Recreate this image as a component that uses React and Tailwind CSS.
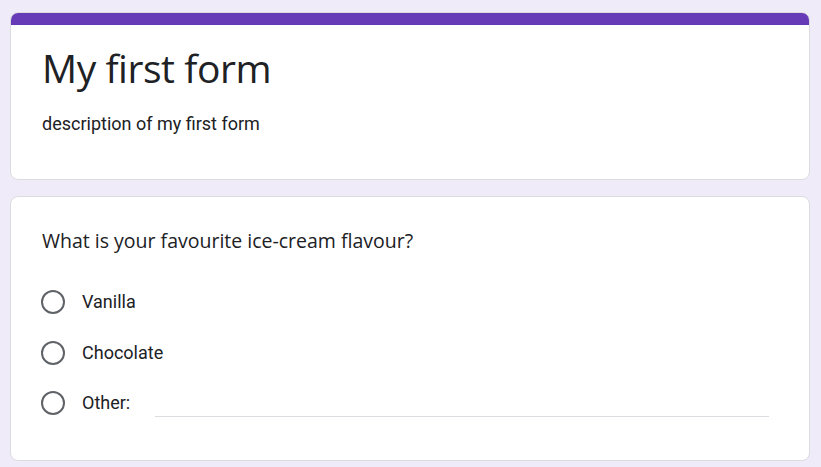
import React from 'react'

const options = ['Vanilla', 'Chocolate']

const Radio = () => (
  <div className="w-6 h-6 -ml-px rounded-full border-2 border-[#5f6368] shrink-0"></div>
)

const App = () => {
  return (
    <div className="min-h-[467px] bg-[#f0ebf8] pt-3 px-[10px] font-['Roboto',sans-serif] text-[#202124]">
      <div className="w-[800px] bg-white rounded-lg border border-[#dadce0] overflow-hidden">
        <div className="h-[13px] bg-[#673ab7] -mx-px -mt-px"></div>
        <div className="px-[31px] pt-[19px] pb-[43px]">
          <h1 className="text-[39px] leading-[48px] font-['Open_Sans',sans-serif] tracking-[-0.45px]">My first form</h1>
          <p className="mt-[20px] text-lg leading-6">description of my first form</p>
        </div>
      </div>

      <div className="w-[800px] mt-[16px] bg-white rounded-lg border border-[#dadce0] px-[31px] pt-[30px] pb-[45px]">
        <div className="text-[19.5px] leading-7 font-['Open_Sans',sans-serif]">What is your favourite ice-cream flavour?</div>
        <div className="mt-[35px] flex flex-col gap-[26.5px]">
          {options.map((o) => (
            <div key={o} className="flex items-center h-6">
              <Radio />
              <span className="ml-[17px] text-lg">{o}</span>
            </div>
          ))}
          <div className="flex items-center h-6">
            <Radio />
            <span className="ml-[17px] text-lg">Other:</span>
            <div className="ml-[25px] w-[614px] self-end -mb-[2px] border-b border-[#dadce0]"></div>
          </div>
        </div>
      </div>
    </div>
  )
}

export default App
